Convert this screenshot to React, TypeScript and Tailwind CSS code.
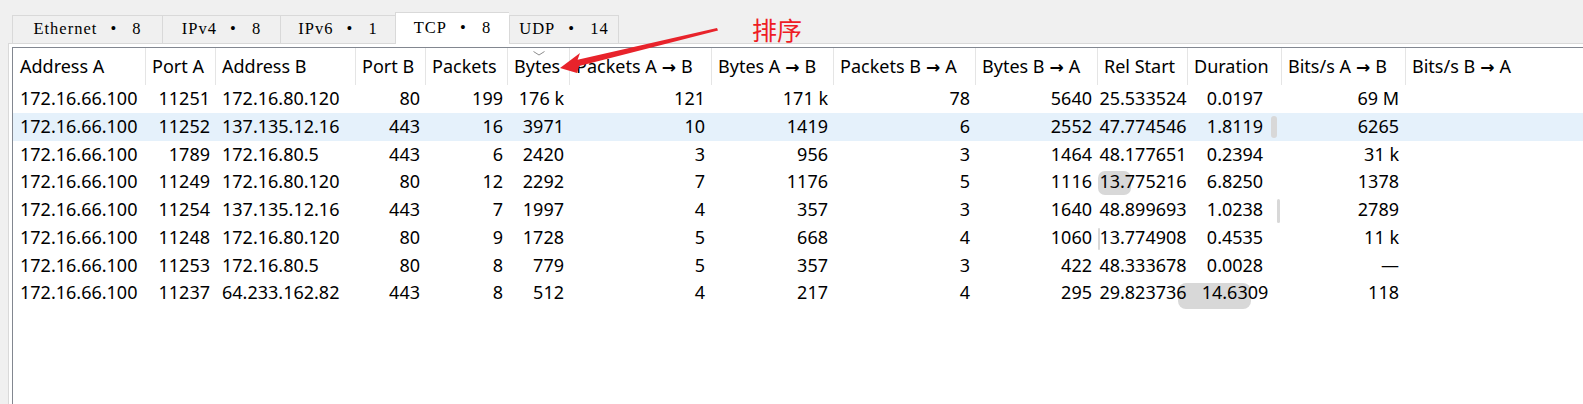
import React from "react";

type Col = { title: string; cell: string };

const tabs = [
  { name: "Ethernet", count: "8", width: "w-[150px]" },
  { name: "IPv4", count: "8", width: "w-[118px]" },
  { name: "IPv6", count: "1", width: "w-[115px]" },
  { name: "TCP", count: "8", width: "w-[114px]", active: true },
  { name: "UDP", count: "14", width: "w-[110px]" },
];

const cols: Col[] = [
  { title: "Address A", cell: "text-left pl-[7px]" },
  { title: "Port A", cell: "text-right pr-[6px]" },
  { title: "Address B", cell: "text-left pl-[6px]" },
  { title: "Port B", cell: "text-right pr-[6px]" },
  { title: "Packets", cell: "text-right pr-[5px]" },
  { title: "Bytes", cell: "text-right pr-[6px]" },
  { title: "Packets A → B", cell: "text-right pr-[7px]" },
  { title: "Bytes A → B", cell: "text-right pr-[6px]" },
  { title: "Packets B → A", cell: "text-right pr-[6px]" },
  { title: "Bytes B → A", cell: "text-right pr-[6px]" },
  { title: "Rel Start", cell: "text-center" },
  { title: "Duration", cell: "text-center" },
  { title: "Bits/s A → B", cell: "text-right pr-[7px]" },
  { title: "Bits/s B → A", cell: "text-right pr-[7px]" },
];

const rows = [
  ["172.16.66.100", "11251", "172.16.80.120", "80", "199", "176 k", "121", "171 k", "78", "5640", "25.533524", "0.0197", "69 M", ""],
  ["172.16.66.100", "11252", "137.135.12.16", "443", "16", "3971", "10", "1419", "6", "2552", "47.774546", "1.8119", "6265", ""],
  ["172.16.66.100", "1789", "172.16.80.5", "443", "6", "2420", "3", "956", "3", "1464", "48.177651", "0.2394", "31 k", ""],
  ["172.16.66.100", "11249", "172.16.80.120", "80", "12", "2292", "7", "1176", "5", "1116", "13.775216", "6.8250", "1378", ""],
  ["172.16.66.100", "11254", "137.135.12.16", "443", "7", "1997", "4", "357", "3", "1640", "48.899693", "1.0238", "2789", ""],
  ["172.16.66.100", "11248", "172.16.80.120", "80", "9", "1728", "5", "668", "4", "1060", "13.774908", "0.4535", "11 k", ""],
  ["172.16.66.100", "11253", "172.16.80.5", "80", "8", "779", "5", "357", "3", "422", "48.333678", "0.0028", "—", ""],
  ["172.16.66.100", "11237", "64.233.162.82", "443", "8", "512", "4", "217", "4", "295", "29.823736", "14.6309", "118", ""],
];

// grey smudges left over in the capture, in row coordinates
const smudges: Record<number, string[]> = {
  1: ["left-[1258px] top-[3px] w-[6px] h-[22px] rounded-full"],
  3: ["left-[1085px] top-[3px] w-[33px] h-[24px] rounded-[7px]"],
  4: ["left-[1264px] top-[3px] w-[3px] h-[24px] rounded-full"],
  5: ["left-[1085px] top-[4px] w-[2px] h-[22px] rounded-full"],
  7: ["left-[1165px] top-[4px] w-[73px] h-[26px] rounded-[8px]"],
};

const grid =
  "grid grid-cols-[133px_70px_140px_70px_82px_62px_142px_122px_142px_122px_90px_94px_124px_1fr]";

const Arrow = ({ text }: { text: string }) => {
  const parts = text.split(" → ");
  if (parts.length < 2) return <span>{text}</span>;
  return (
    <span>
      {parts[0]}
      <span className="mx-[5px] inline-block font-bold [font-family:'DejaVu_Sans',sans-serif] text-[17px]">→</span>
      {parts[1]}
    </span>
  );
};

export default function App() {
  return (
    <div className="relative flex h-[404px] w-[1583px] flex-col overflow-hidden bg-[#f0f0f0] text-black">
      {/* tabs */}
      <div className="flex h-[43px] items-end pl-[12px] [font-family:'Liberation_Serif',serif] text-[16.5px] tracking-[1px]">
        {tabs.map((t, i) => (
          <div
            key={t.name}
            className={[
              "flex items-center justify-center border-l border-t border-[#d9d9d9]",
              t.width,
              t.active ? "relative z-10 -mb-px h-[32px] bg-white" : "h-[28px] bg-[#f0f0f0]",
              i === tabs.length - 1 ? "border-r" : "",
            ].join(" ")}
          >
            <span>{t.name}</span>
            <span className="w-[33px] text-center">•</span>
            <span className="ml-[2px]">{t.count}</span>
          </div>
        ))}
      </div>

      {/* pane */}
      <div className="ml-[8px] flex flex-1 border-l border-t border-[#d9d9d9] bg-white pl-[3px] pt-[3px]">
        <div className="flex-1 border-l border-t border-[#828790] [font-family:'Noto_Sans',sans-serif] text-[18px]">
          <div className={`${grid} h-[37px]`}>
            {cols.map((c, i) => (
              <div
                key={c.title}
                className={[
                  "relative flex items-center whitespace-nowrap",
                  i === 0 ? "pl-[7px]" : "pl-[6px]",
                  i < cols.length - 1 ? "border-r border-[#e5e5e5]" : "",
                ].join(" ")}
              >
                {c.title === "Bytes" && (
                  <svg className="absolute left-[25px] top-[3px]" width="12" height="5" viewBox="0 0 12 5">
                    <polyline points="0.5,0.5 6,4 11.5,0.5" fill="none" stroke="#8c8c8c" strokeWidth="1" />
                  </svg>
                )}
                <Arrow text={c.title} />
              </div>
            ))}
          </div>

          {rows.map((r, ri) => (
            <div key={ri} className={`relative ${grid} h-[27.75px] ${ri === 1 ? "bg-[#e5f1fb]" : ""}`}>
              {(smudges[ri] || []).map((s, si) => (
                <div key={si} className={`absolute bg-[#d8d8d8] ${s}`} />
              ))}
              {r.map((v, ci) => (
                <div key={ci} className={`relative whitespace-nowrap leading-[27.75px] ${cols[ci].cell}`}>
                  {v}
                </div>
              ))}
            </div>
          ))}
        </div>
      </div>

      {/* red annotation */}
      <svg className="pointer-events-none absolute left-0 top-0" width="1583" height="404">
        <polygon
          points="560,68 580,53 577.6,59.8 717,28 718,30.6 579.2,66 577,73"
          fill="#e8232b"
        />
      </svg>
      <span className="absolute left-[752px] top-[14px] text-[25px] leading-[30px] text-[#ee1c25] [font-family:'Noto_Sans_CJK_SC',sans-serif]">
        排序
      </span>
    </div>
  );
}
